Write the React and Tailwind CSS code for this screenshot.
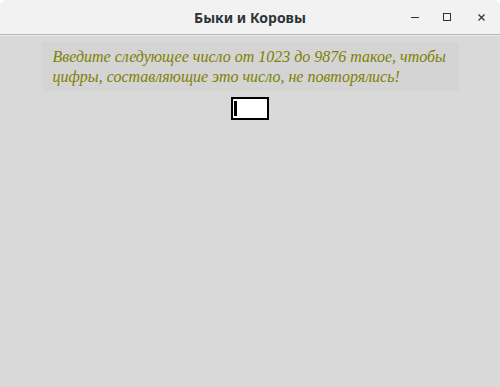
import React from 'react';

const App = () => {
  return (
    <div className="w-[500px] h-[387px] bg-white flex flex-col overflow-hidden">
      <div className="h-[35px] shrink-0 bg-[#f2f2f2] rounded-t-[6px] border-b border-[#b8b8b0] flex items-center relative">
        <div className="flex-1 text-center text-[14px] font-bold text-[#2e3436] font-['Noto_Sans',sans-serif] pt-[1px]">
          Быки и Коровы
        </div>
        <div className="absolute right-0 top-0 h-full flex items-center">
          <div className="w-[34px] flex justify-center">
            <div className="w-[8px] h-[1px] bg-[#2e3436] mt-[1px]" />
          </div>
          <div className="w-[30px] flex justify-center">
            <div className="w-[8px] h-[8px] border border-[#2e3436]" />
          </div>
          <div className="w-[38px] flex justify-center">
            <svg width="7" height="7" viewBox="0 0 7 7">
              <path d="M0.5 0.5 L6.5 6.5 M6.5 0.5 L0.5 6.5" stroke="#2e3436" strokeWidth="1.2" />
            </svg>
          </div>
        </div>
      </div>
      <div className="flex-1 bg-[#d9d9d9] border-t border-[#e8e8e8] flex flex-col items-center pt-[6px]">
        <div className="w-[417px] h-[49px] bg-[#d4d4d4] px-[11px] pt-[5px] text-[16px] leading-[20px] italic text-[#808000] font-['Liberation_Serif',serif]">
          Введите следующее число от 1023 до 9876 такое, чтобы цифры, составляющие это число, не повторялись!
        </div>
        <div className="mt-[6px] w-[38px] h-[23px] border-2 border-black bg-white flex items-center pl-[1px]">
          <div className="w-[3px] h-[15px] bg-black" />
        </div>
      </div>
    </div>
  );
};

export default App;
